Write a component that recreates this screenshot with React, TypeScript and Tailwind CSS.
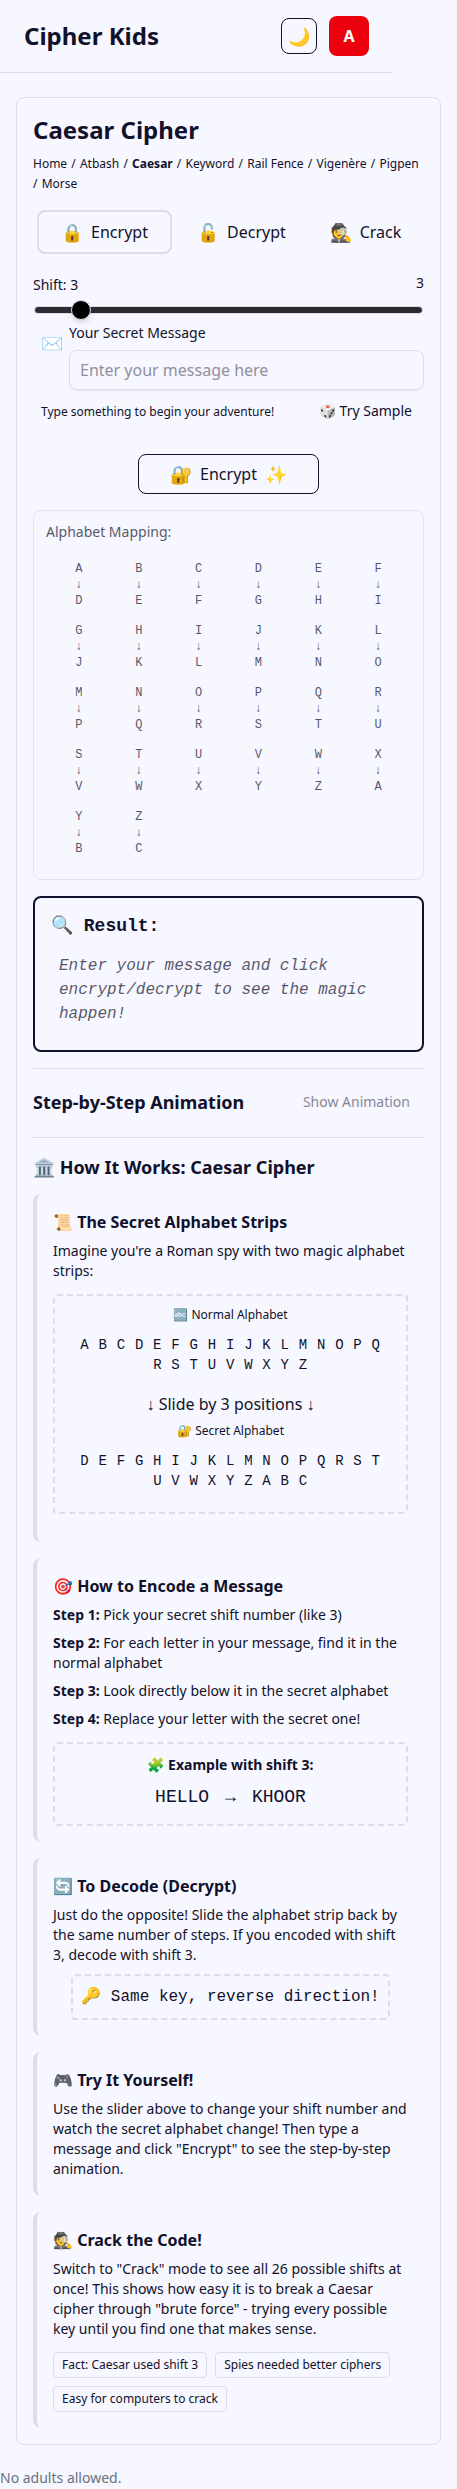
import type { ReactNode } from 'react';

const LETTERS = 'ABCDEFGHIJKLMNOPQRSTUVWXYZ'.split('');
const SHIFT = 3;
const shifted = (i: number) => LETTERS[(i + SHIFT) % 26];

const CRUMBS = ['Home', 'Atbash', 'Caesar', 'Keyword', 'Rail Fence', 'Vigenère', 'Pigpen', 'Morse'];

function Section({ title, className, children }: { title: string; className: string; children: ReactNode }) {
  return (
    <section className={`rounded-lg border-l-4 border-[#dcdcec] p-4 ${className}`}>
      <h3 className="mb-[7px] text-base font-bold leading-6">{title}</h3>
      {children}
    </section>
  );
}

function Strip({ label, letters }: { label: string; letters: string[] }) {
  return (
    <>
      <div className="text-xs leading-4">{label}</div>
      <div className="mt-3 font-['Liberation_Mono',monospace] text-sm leading-5 tracking-wider">{letters.join(' ')}</div>
    </>
  );
}

export default function App() {
  return (
    <div className="h-[2489px] w-full overflow-hidden bg-[#f7f7ff] font-['Noto_Sans',sans-serif] text-[#11112b]">
      <header className="flex h-[73px] w-[393px] items-center justify-between border-b border-[#dcdcec] px-6">
        <div className="text-2xl font-bold leading-8">Cipher Kids</div>
        <div className="flex items-center gap-3">
          <button className="flex size-9 items-center justify-center rounded-lg border border-[#11112b] text-lg">🌙</button>
          <div className="flex size-10 items-center justify-center rounded-lg bg-[#eb000e] text-base font-bold text-white">A</div>
        </div>
      </header>

      <main className="mx-4 mt-6 h-[2348px] rounded-lg border border-[#dcdcec] p-4">
        <h1 className="text-2xl font-bold leading-8">Caesar Cipher</h1>
        <nav className="mt-1.5 text-base leading-5">
          {CRUMBS.map((c, i) => (
            <span key={c}>
              {i > 0 && <> <span className="text-xs">/</span> </>}
              <a className={c === 'Caesar' ? 'text-xs font-bold' : 'text-xs'}>{c.replace(' ', '\u00a0')}</a>
            </span>
          ))}
        </nav>

        <div className="mt-[18px] flex h-11 px-1">
          <button className="flex w-[135px] items-center justify-center gap-2 rounded-lg border-2 border-[#dcdcec] text-base">
            <span className="text-lg">🔒</span>Encrypt
          </button>
          <button className="flex w-[139px] items-center justify-center gap-2 text-base">
            <span className="text-lg">🔓</span>Decrypt
          </button>
          <button className="flex w-[109px] items-center justify-center gap-2 text-base">
            <span className="text-lg">🕵️</span>Crack
          </button>
        </div>

        <div className="mt-[19px] flex h-6 justify-between text-sm leading-5">
          <label className="pt-0.5">Shift: 3</label>
          <span>3</span>
        </div>
        <div className="relative mx-px mt-[9px] h-2 rounded-full border border-[#dcdcec] bg-[#2b2b30]">
          <div className="absolute left-9 top-[-7px] size-5 rounded-full border border-[#dcdcec] bg-black shadow-md" />
        </div>

        <div className="mt-[9px] flex h-[67px]">
          <div className="w-9 pl-2 pt-2 text-lg leading-6">✉️</div>
          <div className="flex-1">
            <div className="text-sm leading-5">Your Secret Message</div>
            <div className="mt-[7px] flex h-10 items-center rounded-lg border border-[#dcdcec] px-2.5 text-base text-[#9090a0] shadow-xs">
              Enter your message here
            </div>
          </div>
        </div>
        <div className="mt-[11px] flex h-5 items-center justify-between pl-2 pr-3 leading-5">
          <span className="pt-0.5 text-xs">Type something to begin your adventure!</span>
          <span className="text-sm leading-5">🎲 Try Sample</span>
        </div>

        <button className="mx-auto mt-[33px] flex h-10 w-[181px] items-center justify-center gap-2 rounded-lg border border-[#11112b] text-base">
          <span className="text-lg">🔐</span>Encrypt<span className="text-lg">✨</span>
        </button>

        <div className="mt-4 h-[370px] rounded-lg border border-[#dcdcec] px-3 pt-[11px] opacity-70">
          <div className="text-sm leading-5">Alphabet Mapping:</div>
          <div className="mx-[3px] mt-[19px] grid grid-cols-6 gap-y-3.5 text-center font-['Liberation_Mono',monospace] text-xs leading-4">
            {LETTERS.map((l, i) => (
              <div key={l}>
                <div>{l}</div>
                <div>↓</div>
                <div>{shifted(i)}</div>
              </div>
            ))}
          </div>
        </div>

        <div className="mt-4 h-[156px] rounded-lg border-2 border-[#11112b] p-4 font-['Liberation_Mono',monospace]">
          <div className="h-6 text-lg font-bold leading-6">🔍 Result:</div>
          <p className="mt-4 px-2 text-base italic leading-6 opacity-70">
            Enter your message and click encrypt/decrypt to see the magic happen!
          </p>
        </div>

        <div className="mt-4 flex h-[69px] items-center justify-between border-t border-[#dcdcec] pb-0.5 pr-3.5">
          <h2 className="text-lg font-bold">Step-by-Step Animation</h2>
          <span className="text-sm opacity-50">Show Animation</span>
        </div>
        <div className="h-[57px] border-t border-[#dcdcec] pt-[15px]">
          <h2 className="text-lg font-bold leading-7">🏛️ How It Works: Caesar Cipher</h2>
        </div>

        <Section title="📜 The Secret Alphabet Strips" className="h-[348px]">
          <p className="text-sm leading-5">Imagine you're a Roman spy with two magic alphabet strips:</p>
          <div className="mt-[13px] h-[220px] rounded border-2 border-dashed border-[#dcdcec] px-5 pt-[11px] text-center">
            <Strip label="🔤 Normal Alphabet" letters={LETTERS} />
            <div className="mb-[7px] mt-[17px] text-base leading-6">↓ Slide by 3 positions ↓</div>
            <Strip label="🔐 Secret Alphabet" letters={LETTERS.map((_, i) => shifted(i))} />
          </div>
        </Section>

        <Section title="🎯 How to Encode a Message" className="mt-4 h-[284px]">
          <div className="space-y-2 text-sm leading-5">
            <p><strong>Step 1:</strong> Pick your secret shift number (like 3)</p>
            <p><strong>Step 2:</strong> For each letter in your message, find it in the normal alphabet</p>
            <p><strong>Step 3:</strong> Look directly below it in the secret alphabet</p>
            <p><strong>Step 4:</strong> Replace your letter with the secret one!</p>
          </div>
          <div className="mt-[13px] h-[84px] rounded border-2 border-dashed border-[#dcdcec] pt-[11px] text-center">
            <div className="text-sm font-bold leading-5">🧩 Example with shift 3:</div>
            <div className="mt-2 flex justify-center gap-4 font-['Liberation_Mono',monospace] text-lg leading-7">
              <span>HELLO</span><span>→</span><span>KHOOR</span>
            </div>
          </div>
        </Section>

        <Section title="🔄 To Decode (Decrypt)" className="mt-4 h-[178px]">
          <p className="text-sm leading-5">
            Just do the opposite! Slide the alphabet strip back by the same number of steps. If you encoded with shift 3, decode with shift 3.
          </p>
          <div className="mx-auto mt-[9px] flex h-[46px] w-[319px] items-center justify-center whitespace-pre rounded border-2 border-dashed border-[#dcdcec] font-['Liberation_Mono',monospace] text-base">
            🔑 Same key, reverse direction!
          </div>
        </Section>

        <Section title="🎮 Try It Yourself!" className="mt-4 h-[144px]">
          <p className="text-sm leading-5">
            Use the slider above to change your shift number and watch the secret alphabet change! Then type a message and click "Encrypt" to see the step-by-step animation.
          </p>
        </Section>

        <Section title="🕵️ Crack the Code!" className="mt-4 h-[216px]">
          <p className="text-sm leading-5">
            Switch to "Crack" mode to see all 26 possible shifts at once! This shows how easy it is to break a Caesar cipher through "brute force" - trying every possible key until you find one that makes sense.
          </p>
          <div className="mt-[13px] flex flex-wrap gap-2 text-xs leading-4">
            {['Fact: Caesar used shift 3', 'Spies needed better ciphers', 'Easy for computers to crack'].map((t) => (
              <span key={t} className="rounded border border-[#dcdcec] px-2 py-1">{t}</span>
            ))}
          </div>
        </Section>
      </main>

      <footer className="mt-[23px] text-sm leading-5 text-[#6b7280]">No adults allowed.</footer>
    </div>
  );
}
